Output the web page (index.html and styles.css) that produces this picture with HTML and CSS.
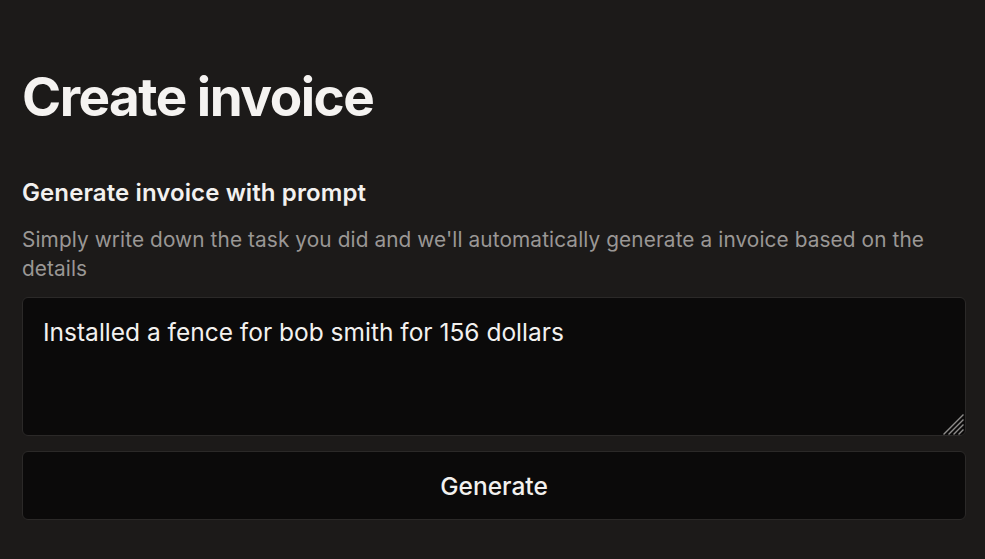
FILE: index.html
```html
<!DOCTYPE html>
<html lang="en">
<head>
<meta charset="utf-8">
<title>Create invoice</title>
<link rel="stylesheet" href="styles.css">
</head>
<body>
<main class="page">
  <h1 class="title">Create invoice</h1>
  <section class="prompt">
    <h2 class="prompt-title">Generate invoice with prompt</h2>
    <p class="prompt-desc">Simply write down the task you did and we'll automatically generate a invoice based on the details</p>
    <div class="input-wrap">
      <textarea class="prompt-input">Installed a fence for bob smith for 156 dollars</textarea>
      <svg class="resizer" width="22" height="22" viewBox="0 0 22 22" aria-hidden="true">
        <g stroke="#8d8b8a" stroke-width="1.3" stroke-linecap="square">
          <line x1="2" y1="21" x2="21" y2="2"/>
          <line x1="7" y1="21" x2="21" y2="7"/>
          <line x1="12" y1="21" x2="21" y2="12"/>
          <line x1="17" y1="21" x2="21" y2="17"/>
        </g>
      </svg>
    </div>
    <button class="prompt-btn" type="button">Generate</button>
  </section>
</main>
</body>
</html>
```
FILE: styles.css
```css
html, body {
  margin: 0;
  padding: 0;
  background: #1c1a19;
  height: 100%;
}
body {
  font-family: Inter, "Noto Sans", sans-serif;
  color: #f3f1ef;
}
.page {
  padding: 62px 19px 0 22px;
}
.title {
  margin: 0;
  font-size: 53px;
  font-weight: 700;
  line-height: 70px;
  letter-spacing: -1.5px;
  color: #f5f3f1;
}
.prompt {
  display: flex;
  flex-direction: column;
  margin-top: 46px;
}
.prompt-title {
  margin: 0;
  font-size: 24px;
  font-weight: 600;
  line-height: 30px;
  letter-spacing: 0.1px;
  color: #f3f1ef;
}
.prompt-desc {
  margin: 17px 0 0;
  font-size: 20.8px;
  line-height: 29px;
  letter-spacing: 0.1px;
  color: #9a9795;
}
.input-wrap {
  position: relative;
  display: flex;
  margin-top: 14px;
}
.prompt-input {
  flex: 1;
  box-sizing: border-box;
  height: 139px;
  padding: 18px 20px;
  background: #0b0a0a;
  border: 1px solid #2b2928;
  border-radius: 6px;
  color: #f3f1ef;
  font-family: inherit;
  font-size: 24.5px;
  line-height: 32px;
  resize: none;
  outline: none;
}
.resizer {
  position: absolute;
  right: 2px;
  bottom: 1px;
}
.prompt-btn {
  margin-top: 15px;
  height: 69px;
  background: #0b0a0a;
  border: 1px solid #2b2928;
  border-radius: 6px;
  color: #f3f1ef;
  font-family: inherit;
  font-size: 24.5px;
  font-weight: 500;
  cursor: pointer;
}
```
